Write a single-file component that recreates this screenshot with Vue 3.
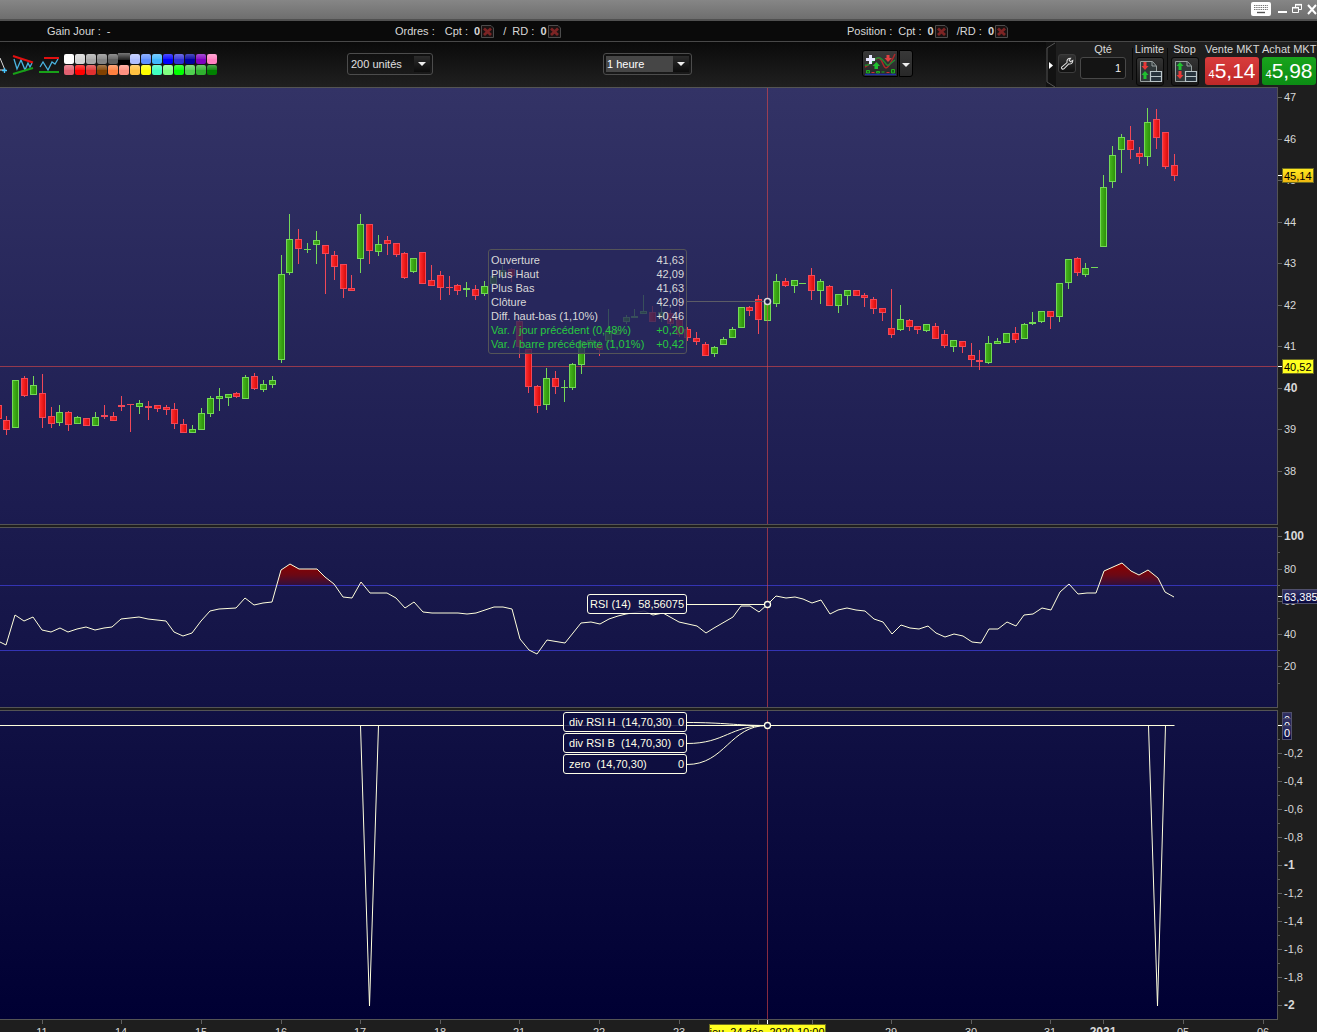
<script setup>
import { ref } from 'vue'

const WIDTH = 1277
const CURSOR_X = 767
const panes = {
  price: { top: 88, height: 436 },
  rsi: { top: 528, height: 179 },
  div: { top: 711, height: 308 },
}
const box = (p) => `0 ${p.top} ${WIDTH} ${p.height}`
const pctX = (x) => `${(x / WIDTH) * 100}%`
const pctY = (y, p) => `${((y - p.top) / p.height) * 100}%`

const units = ref('200 unités')
const period = ref('1 heure')
const quantity = ref('1')

const swatches = [
  ['#ffffff', '#d4d4d4', '#a8a8a8', '#848484', '#606060', '#000000', '#b0c0ff', '#6090ff', '#40b8ff', '#0000ff', '#3030d8', '#0000a0', '#8000c0', '#ff80c0'],
  ['#e06070', '#ff0000', '#e03030', '#804000', '#ff8040', '#ff9080', '#ffc040', '#ffff00', '#40ffc0', '#80ff80', '#00ff00', '#50d050', '#30b030', '#008000'],
]

// direction, high, body top, body bottom, low
const series = `
r 405 405 419 419|r 416 420 430 435|g 380 380 428 428|r 376 378 396 397|g 376 385 395 395|r 374 393 418 428
r 407 416 424 428|g 405 412 423 426|r 411 412 425 431|g 416 417 424 424|r 418 418 426 426|g 412 417 426 426
r 405 415 417 419|r 412 416 421 421|r 396 405 407 411|r 404 404 405 432|g 400 403 407 414|r 401 406 408 420
r 405 405 409 412|r 405 407 410 415|r 403 409 424 429|r 419 424 433 433|g 425 429 433 433|g 408 413 430 430
g 396 398 414 417|g 388 396 399 411|g 394 394 398 406|r 392 393 397 398|g 375 377 399 399|r 373 376 389 390
g 380 384 390 392|g 376 380 385 388|g 255 274 360 363|g 214 239 273 275|r 229 239 249 264|g 243 249 250 253
g 231 240 245 264|r 245 245 254 294|r 251 255 267 280|r 264 264 289 298|r 275 288 291 291|g 214 224 259 273
r 224 224 251 264|g 235 244 252 256|r 236 240 244 255|r 243 243 255 257|r 252 253 278 279|g 258 258 272 273
r 252 252 284 284|r 265 280 286 286|r 271 275 288 300|r 276 287 288 295|r 284 285 291 295|g 282 288 290 297
r 285 289 296 300|g 281 286 294 296|g 276 276 284 284|g 265 270 276 280|r 268 269 276 282|r 318 321 347 358
r 349 349 387 393|r 385 386 406 413|g 368 378 405 410|r 371 378 387 394|g 380 387 388 402|g 363 364 388 390
g 341 341 365 374|g 338 340 345 348|r 340 345 350 356|g 309 331 341 343|g 329 330 335 335|g 315 317 322 324
g 309 316 318 318|g 295 311 314 314|r 306 312 322 322|g 303 312 318 322|r 310 313 324 326|r 292 319 335 337
r 327 329 338 341|r 332 338 342 345|r 342 344 356 356|g 346 347 354 357|g 337 339 345 345|g 327 329 338 338
g 307 307 328 328|r 306 307 311 316|r 295 299 320 334|g 301 301 321 321|g 274 281 304 307|r 278 281 286 287
g 280 280 286 293|g 283 283 284 284|r 268 275 291 300|g 279 281 291 304|r 285 286 306 306|g 294 294 306 313
g 290 290 296 305|r 290 290 296 296|r 293 295 298 307|r 297 299 309 314|r 308 308 313 321|r 289 328 335 338
g 305 319 330 331|r 319 320 327 331|r 326 326 330 334|g 324 324 331 332|r 323 326 339 339|r 330 334 346 348
g 340 340 347 352|r 341 341 347 353|r 343 355 360 367|r 350 360 362 370|g 336 343 363 364|g 338 341 344 344
g 333 333 343 343|r 327 333 340 343|g 323 324 339 339|g 312 322 324 325|g 311 311 322 323|r 311 311 317 329
g 283 283 317 322|g 259 259 283 289|r 257 258 273 276|g 263 268 275 277|g 267 267 268 268|g 175 187 247 247
g 146 155 182 188|g 134 137 150 173|r 126 140 150 159|r 147 153 157 164|g 108 122 157 166|r 109 119 138 149
r 132 132 167 169|r 154 165 176 181`

const candles = series.trim().split(/[|\n]/).map((row, i) => {
  const [dir, ...values] = row.trim().split(' ')
  const [high, top, bottom, low] = values.map(Number)
  return { dir, high, top, bottom, low, x: Math.floor(6.9 + 8.845 * (i - 1)) }
})

const rsi = '0,642 6,645 15,615 24,621 33,617 42,630 51,632 60,628 68,632 77,629 86,627 95,630 104,628 112,627 121,619 130,618 139,617 148,619 166,621 174,632 183,636 192,633 201,621 210,611 219,609 236,608 245,598 254,605 263,603 272,602 281,570 290,564 299,569 317,569 325,577 334,584 343,597 352,598 361,582 370,593 387,593 396,598 405,608 414,602 423,612 432,613 458,613 467,614 476,613 485,610 494,607 503,607 512,609 520,639 529,650 537,654 547,640 565,643 581,623 591,622 600,624 609,619 618,616 626,614 644,611 653,615 663,613 679,622 688,624 697,626 706,633 714,628 733,617 741,606 750,606 759,612 768,604 776,596 786,598 795,597 803,599 812,603 821,600 830,614 838,610 847,608 856,610 865,611 874,619 883,622 892,634 901,625 910,628 919,629 928,626 936,633 945,637 954,634 963,636 972,642 981,643 989,629 998,629 1007,622 1016,626 1024,615 1033,614 1042,608 1051,610 1060,592 1069,584 1078,594 1087,593 1096,593 1104,571 1113,567 1122,563 1131,571 1139,575 1148,570 1158,578 1165,592 1174,597'

const priceLabels = [47, 46, 45, 44, 43, 42, 41, 40, 39, 38].map((v, i) => ({
  text: String(v), y: Math.round(97 + i * 41.55), bold: v === 40,
}))
const rsiLabels = [100, 80, 60, 40, 20].map((v, i) => ({
  text: String(v), y: Math.round(536 + i * 32.6), bold: v === 100,
}))
const divLabels = ['-0,2', '-0,4', '-0,6', '-0,8', '-1', '-1,2', '-1,4', '-1,6', '-1,8', '-2'].map((text, i) => ({
  text, y: 753 + i * 28, bold: text === '-1' || text === '-2',
}))
const axes = {
  price: { labels: priceLabels, minor: [], tags: [{ text: '45,14', y: 175, kind: 'last' }, { text: '40,52', y: 366, kind: 'cursor' }] },
  rsi: { labels: rsiLabels, minor: [552, 585, 618, 650, 683], tags: [{ text: '63,3854', y: 596, kind: 'value' }] },
  div: {
    labels: divLabels,
    minor: divLabels.map((l) => l.y - 14),
    tags: [{ text: '0', y: 719, kind: 'value' }, { text: '0', y: 725, kind: 'value' }, { text: '0', y: 732, kind: 'value' }],
  },
}

const dates = [
  ['11', 42], ['14', 121], ['15', 201], ['16', 281], ['17', 360], ['18', 440], ['21', 519], ['22', 599], ['23', 679],
  ['', 758], ['', 812], ['29', 891], ['30', 971], ['31', 1050], ['2021', 1103], ['05', 1183], ['06', 1263],
]

const ohlc = [
  ['Ouverture', '41,63'], ['Plus Haut', '42,09'], ['Plus Bas', '41,63'], ['Clôture', '42,09'],
  ['Diff. haut-bas (1,10%)', '+0,46'], ['Var. / jour précédent (0,48%)', '+0,20'], ['Var. / barre précédente (1,01%)', '+0,42'],
]
const divTips = [['div RSI H', '(14,70,30)'], ['div RSI B', '(14,70,30)'], ['zero', '(14,70,30)']]
</script>

<template>
  <div class="app">
    <header class="titlebar">
      <button class="keyboard" aria-label="Clavier">
        <svg width="20" height="14" viewBox="0 0 20 14">
          <rect width="20" height="14" rx="2" fill="#fff" />
          <g stroke="#777" stroke-width="1" stroke-dasharray="1.4 .8">
            <path d="M3 3.5H17M3 5.5H17M3 7.5H17" />
          </g>
          <path d="M6 10.5H14" stroke="#555" stroke-width="1.4" />
        </svg>
      </button>
      <button class="win" aria-label="Réduire">
        <svg width="10" height="14" viewBox="0 0 10 14"><path d="M1 10H10" stroke="#fff" stroke-width="2" /></svg>
      </button>
      <button class="win" aria-label="Restaurer">
        <svg width="10" height="14" viewBox="0 0 10 14" fill="none" stroke="#fff"><path d="M3.5 5V2.5H9.5V7.5H7" /><path d="M3 2.7H10" stroke-width="1.6" /><path d="M.5 5.5H6.500V10.5H.5Z" /><path d="M0 5.700H7" stroke-width="1.600" /></svg>
      </button>
      <button class="win" aria-label="Fermer">
        <svg width="10" height="14" viewBox="0 0 10 14"><path d="M1 3L9 12M9 3L1 12" stroke="#fff" stroke-width="2" /></svg>
      </button>
    </header>

    <section class="account">
      <div class="gain"><span>Gain Jour :</span><span>-</span></div>
      <div class="counts">
        <span class="lead">Ordres :</span>
        <span>Cpt : &nbsp;<b>0</b></span>
        <button class="cancel" aria-label="Annuler ordres Cpt"><svg width="13" height="13" viewBox="0 0 13 13"><path d="M.5 .5H10L12.500 3V12.500H.5Z" fill="#1a1212" stroke="#4c4c4c" /><path d="M3 3.500L10 10M10 3.500L3 10" stroke="#7c2424" stroke-width="2.800" /></svg></button>
        <span>/ &nbsp;RD : &nbsp;<b>0</b></span>
        <button class="cancel" aria-label="Annuler ordres RD"><svg width="13" height="13" viewBox="0 0 13 13"><path d="M.5 .5H10L12.500 3V12.500H.5Z" fill="#1a1212" stroke="#4c4c4c" /><path d="M3 3.500L10 10M10 3.500L3 10" stroke="#7c2424" stroke-width="2.800" /></svg></button>
      </div>
      <div class="counts">
        <span class="lead tight">Position :</span>
        <span>Cpt : &nbsp;<b>0</b></span>
        <button class="cancel" aria-label="Clôturer position Cpt"><svg width="13" height="13" viewBox="0 0 13 13"><path d="M.5 .5H10L12.500 3V12.500H.5Z" fill="#1a1212" stroke="#4c4c4c" /><path d="M3 3.500L10 10M10 3.500L3 10" stroke="#7c2424" stroke-width="2.800" /></svg></button>
        <span>/RD : &nbsp;<b>0</b></span>
        <button class="cancel" aria-label="Clôturer position RD"><svg width="13" height="13" viewBox="0 0 13 13"><path d="M.5 .5H10L12.500 3V12.500H.5Z" fill="#1a1212" stroke="#4c4c4c" /><path d="M3 3.500L10 10M10 3.500L3 10" stroke="#7c2424" stroke-width="2.800" /></svg></button>
      </div>
    </section>

    <section class="toolbar">
      <div class="drawing">
        <button class="tool cut" aria-label="Angle">
          <svg width="8" height="22" viewBox="0 0 8 22" fill="none"><path d="M0 4L5 16H0" stroke="#ddd" /><path d="M2 16.500H7M4.500 14V19" stroke="#4ac8ff" stroke-width="1.400" /></svg>
        </button>
        <button class="tool" aria-label="Triangle">
          <svg width="22" height="22" viewBox="0 0 22 22" fill="none"><path d="M2 5L5 15L9 6L13 16L16 9L18 13L20 9" stroke="#4ab4e0" stroke-width="1.300" /><path d="M1 2L21 8.500" stroke="#e01010" stroke-width="2" /><path d="M1 20L21 14" stroke="#18a018" stroke-width="2" /></svg>
        </button>
        <button class="tool" aria-label="Support et résistance">
          <svg width="22" height="22" viewBox="0 0 22 22" fill="none"><path d="M2 13L5 8L10 16L14 8L17 10L20 5" stroke="#4ab4e0" stroke-width="1.300" /><path d="M6 4H21" stroke="#e01010" stroke-width="2" /><path d="M1 18H21" stroke="#18a018" stroke-width="2" /></svg>
        </button>
        <div class="palette">
          <div v-for="(row, r) in swatches" :key="r" class="palette-row">
            <button
              v-for="c in row" :key="c" class="swatch" :class="{ chosen: c === '#000000' }"
              :style="{ backgroundColor: c }" :aria-label="'Couleur ' + c"
            ></button>
          </div>
        </div>
      </div>
      <div>
        <label class="combo">
          <select v-model="units" aria-label="Nombre d'unités"><option>200 unités</option></select>
          <svg class="arrow" width="16" height="16" viewBox="0 0 16 16"><path d="M4 6H12L8 10Z" fill="#eee" /></svg>
        </label>
      </div>
      <div>
        <label class="combo lit">
          <select v-model="period" aria-label="Période"><option>1 heure</option></select>
          <svg class="arrow" width="16" height="16" viewBox="0 0 16 16"><path d="M4 6H12L8 10Z" fill="#eee" /></svg>
        </label>
      </div>
      <div class="indicators">
        <button aria-label="Ajouter un indicateur">
          <svg width="34" height="25" viewBox="0 0 34 25" fill="none">
            <path d="M2 16C6 15 8 9 12 8S17 6 20 13S25 18 32 3" stroke="#b02828" stroke-width="1.500" />
            <path d="M2 14C8 17 11 4 17 7S23 17 27 13L32 9" stroke="#208a30" stroke-width="1.500" />
            <path d="M7.500 4V13M3 8.500H12" stroke="#e8e8ff" stroke-width="3" />
            <path d="M23.500 4H26.500V7H29L25 11L21.500 7H23.500Z" fill="#e04040" />
            <path d="M11.500 18V15H9.500L13.500 11L17 15H15V18Z" fill="#20c030" />
            <g stroke-width="1"><path d="M3.500 19.500H6.500V22H3.500ZM13.500 20.500H16.500V22H13.500ZM18.500 21H21.500M28.500 18.500H31.500V22H28.500Z" fill="#156015" stroke="#20b020" /><path d="M8.500 21.500H11.500M23.500 21.500H26.500" stroke="#d03030" /></g>
            <path d="M2 23.500H33" stroke="#2030a0" stroke-width="1.500" />
          </svg>
        </button>
        <button aria-label="Liste des indicateurs">
          <svg width="12" height="25" viewBox="0 0 12 25"><path d="M2 12H10L6 16Z" fill="#eee" /></svg>
        </button>
      </div>
      <div class="trading">
        <svg class="bracket" width="10" height="45" viewBox="0 0 10 45" fill="none"><path d="M9 1L1 6V40L9 45" stroke="#555" /><path d="M3 20L7 23.500L3 27Z" fill="#fff" /></svg>
        <button class="wrench" aria-label="Réglages">
          <svg width="18" height="18" viewBox="0 0 18 18" fill="none"><path d="M3 13L9 8C8.500 5 10 3 13 3L11.500 5.500L13 7L15.500 5.500C15.500 8.500 13.500 10 11 9.500L5.500 15C4 16 2 14.500 3 13Z" stroke="#ddd" stroke-width="1.200" /></svg>
        </button>
        <div class="field">
          <label for="qty">Qté</label>
          <input id="qty" v-model="quantity" type="text" />
        </div>
        <div class="order">
          <span id="limit">Limite</span>
          <button aria-labelledby="limit">
            <svg width="26" height="27" viewBox="0 0 26 27" fill="none"><path d="M3.500 3.500H15.500L19.500 8V23.500H3.500Z" fill="#30383a" stroke="#98a0a0" /><path d="M15 4V8H19" stroke="#98a0a0" /><path d="M6.500 4H9.500V8H11.500L8 12L4.500 8H6.500Z" fill="#e83838" /><path d="M6.500 21V17H4.500L8 13L11.500 17H9.500V21Z" fill="#20c030" /><path d="M13.500 13.500H24.500V23.500H13.500ZM13.500 18.500H24.500" fill="#26323c" stroke="#b8c4c8" stroke-width="1.200" /></svg>
          </button>
        </div>
        <div class="order">
          <span id="stop">Stop</span>
          <button aria-labelledby="stop">
            <svg width="26" height="27" viewBox="0 0 26 27" fill="none"><path d="M3.500 3.500H15.500L19.500 8V23.500H3.500Z" fill="#30383a" stroke="#98a0a0" /><path d="M15 4V8H19" stroke="#98a0a0" /><path d="M6.500 12V8H4.500L8 4L11.500 8H9.500V12Z" fill="#20c030" /><path d="M6.500 13H9.500V17H11.500L8 21L4.500 17H6.500Z" fill="#e83838" /><path d="M13.500 13.500H24.500V23.500H13.500ZM13.500 18.500H24.500" fill="#26323c" stroke="#b8c4c8" stroke-width="1.200" /></svg>
          </button>
        </div>
        <div class="market">
          <span id="sell">Vente MKT</span>
          <button class="sell" aria-describedby="sell"><small>4</small>5,14</button>
        </div>
        <div class="market">
          <span id="buy">Achat MKT</span>
          <button class="buy" aria-describedby="buy"><small>4</small>5,98</button>
        </div>
      </div>
    </section>

    <main class="charts">
      <section v-for="(pane, name) in panes" :key="name" class="row" :class="name">
        <div class="plot">
          <svg v-if="name === 'price'" class="canvas" :viewBox="box(pane)" preserveAspectRatio="none">
            <defs>
              <linearGradient id="up"><stop offset="0" stop-color="#45b51c" /><stop offset="1" stop-color="#2d920a" /></linearGradient>
              <linearGradient id="down"><stop offset="0" stop-color="#ff2c2c" /><stop offset="1" stop-color="#d80c0c" /></linearGradient>
            </defs>
            <rect x="0" y="366" :width="WIDTH" height="1" class="cross" />
            <g v-for="(c, i) in candles" :key="i" :class="c.dir">
              <rect :x="c.x" :y="c.high" width="1" :height="c.low - c.high" />
              <rect :x="c.x - 3" :y="c.top" width="7" :height="c.bottom - c.top" />
              <rect v-if="c.bottom - c.top > 2" class="fill" :x="c.x - 2" :y="c.top + 1" width="5" :height="c.bottom - c.top - 2" />
            </g>
            <rect :x="CURSOR_X" :y="pane.top" width="1" :height="pane.height" class="cross" />
            <rect x="687" y="301" width="77" height="1" fill="#5c5c66" />
            <circle cx="767.5" cy="301.5" r="3" fill="#1c1c48" stroke="#ddd" stroke-width="1.500" />
          </svg>

          <svg v-else-if="name === 'rsi'" class="canvas" :viewBox="box(pane)" preserveAspectRatio="none">
            <defs>
              <linearGradient id="hot" gradientUnits="userSpaceOnUse" x1="0" y1="564" x2="0" y2="586"><stop offset="0" stop-color="#8c0000" /><stop offset=".5" stop-color="#6c0814" /><stop offset="1" stop-color="#2c1040" /></linearGradient>
              <clipPath id="over"><rect x="0" y="528" :width="WIDTH" height="57" /></clipPath>
            </defs>
            <polygon :points="'0,700 ' + rsi + ' 1174,700'" fill="url(#hot)" clip-path="url(#over)" />
            <path d="M0 585.500H1277M0 650.500H1277" stroke="#3434b4" />
            <polyline :points="rsi" class="curve" />
            <rect :x="CURSOR_X" :y="pane.top" width="1" :height="pane.height" class="cross" />
            <path d="M687 604.500H764" class="curve" />
            <circle cx="767.500" cy="604.500" r="3" fill="#14144a" stroke="#ffffe8" stroke-width="1.300" />
          </svg>

          <svg v-else class="canvas" :viewBox="box(pane)" preserveAspectRatio="none">
            <rect :x="CURSOR_X" :y="pane.top" width="1" :height="pane.height" class="cross" />
            <path d="M0 725.500H1174.500M360.500 725.500L369.500 1006L378.500 725.500M1148.500 725.500L1157.500 1006L1165.500 725.500" class="curve" />
            <path d="M687 722.500C725 722.500 735 725.500 767 725.500M687 743.500C725 743.500 730 725.500 767 725.500M687 764.500C725 764.500 730 725.500 767 725.500" class="curve" />
            <circle cx="767.500" cy="725.500" r="3" fill="#0e0e42" stroke="#ffffe8" stroke-width="1.300" />
          </svg>

          <dl v-if="name === 'price'" class="tip ohlc" :style="{ top: pctY(249, pane) }">
            <div v-for="(r, i) in ohlc" :key="r[0]" :class="{ gainful: i > 4 }"><dt>{{ r[0] }}</dt><dd>{{ r[1] }}</dd></div>
          </dl>
          <div v-else-if="name === 'rsi'" class="tip single" :style="{ top: pctY(594, pane) }">
            <span>RSI (14)</span><span>58,56075</span>
          </div>
          <div v-else class="tip stack" :style="{ top: pctY(712, pane) }">
            <div v-for="t in divTips" :key="t[0]" class="single wide"><span>{{ t[0] }} &nbsp;{{ t[1] }}</span><span>0</span></div>
          </div>
        </div>

        <div class="axis">
          <i v-for="m in axes[name].minor" :key="'m' + m" class="minor" :style="{ top: pctY(m, pane) }"></i>
          <span v-for="l in axes[name].labels" :key="l.text" class="label" :class="{ bold: l.bold }" :style="{ top: pctY(l.y, pane) }">{{ l.text }}</span>
          <i v-if="name === 'div'" class="mark" :style="{ top: pctY(725, pane) }"></i>
          <span v-for="t in axes[name].tags" :key="t.y" class="tag" :class="t.kind" :style="{ top: pctY(t.y, pane) }">{{ t.text }}</span>
        </div>
      </section>

      <footer class="dates">
        <div class="scale">
          <span v-for="d in dates" :key="d[1]" class="date" :class="{ bold: d[0] === '2021' }" :style="{ left: pctX(d[1]) }">{{ d[0] }}</span>
          <span class="date now" :style="{ left: pctX(CURSOR_X) }"><mark>jeu. 24 déc. 2020 10:00</mark></span>
        </div>
      </footer>
    </main>
  </div>
</template>

<style>
body { margin: 0; background: #1e1e1e; }
</style>

<style scoped>
.app {
  display: flex;
  flex-direction: column;
  height: 100vh;
  min-width: 1100px;
  overflow: hidden;
  background: #1e1e1e;
  color: #d8d8d8;
  font: 11px/14px "Liberation Sans", Arial, sans-serif;
}
.app * { box-sizing: border-box; }
button { padding: 0; border: 0; background: none; color: inherit; font: inherit; }
svg { display: block; }

.titlebar {
  display: flex;
  justify-content: flex-end;
  align-items: flex-start;
  gap: 5px;
  height: 21px;
  padding-top: 2px;
  border-bottom: 2px solid #505050;
  background: linear-gradient(#868686, #6e6e6e);
}
.keyboard { margin-right: 1px; }

.account {
  display: grid;
  grid-template-columns: 395fr 452fr 470fr;
  align-items: center;
  height: 21px;
  border-bottom: 1px solid #484848;
  background: #0a0a0a;
}
.gain { display: flex; gap: 6px; padding-left: 47px; }
.counts { display: flex; align-items: center; white-space: nowrap; }
.lead { margin-right: 10px; }
.lead.tight { margin-right: 6px; }
.cancel { margin: 0 9px 0 1px; }

.toolbar {
  display: grid;
  grid-template-columns: 347fr 256fr 259fr 184fr 271px;
  height: 45px;
  background: linear-gradient(#0a0a0a, #202020);
}
.drawing { display: flex; align-items: center; }
.tool { margin-right: 4px; }
.palette { display: flex; flex-direction: column; gap: 1px; }
.palette-row { display: flex; gap: 1px; height: 10px; }
.swatch {
  width: 10px;
  height: 10px;
  border-radius: 2px;
  background-image: linear-gradient(rgba(255, 255, 255, .3), rgba(255, 255, 255, .1) 45%, transparent 50%);
}
.swatch.chosen {
  width: 12px;
  height: 12px;
  margin: -1px -1px 0;
  border-radius: 0;
  background-image: linear-gradient(#777, #222 55%, #000 60%);
}
.combo {
  position: relative;
  display: block;
  width: 86px;
  height: 22px;
  margin-top: 11px;
  padding: 2px;
  border: 1px solid #4c4c4c;
  border-radius: 3px;
}
.combo.lit { width: 89px; }
.combo select {
  appearance: none;
  width: 100%;
  height: 16px;
  padding: 0 2px 0 1px;
  border: 0;
  background: none;
  color: #e0e0e0;
  font: inherit;
}
.combo.lit select { background: #464646; color: #fff; }
.arrow {
  position: absolute;
  top: 2px;
  right: 2px;
  background: linear-gradient(#2c2c2c, #0c0c0c);
  pointer-events: none;
}
.indicators { display: flex; gap: 1px; height: 27px; margin-top: 8px; }
.indicators button { border: 1px solid #000; border-radius: 3px 0 0 3px; background: linear-gradient(#383838, #282828); }
.indicators button + button { border-radius: 0 3px 3px 0; }

.trading { display: flex; background: #1e1e1e; }
.trading > div > span, .trading label { display: block; height: 15px; line-height: 15px; white-space: nowrap; }
.bracket { flex: none; background: #121212; }
.wrench {
  flex: none;
  align-self: flex-start;
  margin: 12px 4px 0 2px;
  border: 1px solid #3c3c3c;
  border-radius: 3px;
  background: linear-gradient(#333, #101010);
}
.wrench svg { width: 16px; height: 17px; }
.field { width: 46px; margin-right: 6px; text-align: center; }
.field input {
  display: block;
  width: 46px;
  height: 22px;
  padding: 0 4px;
  border: 1px solid #484848;
  border-radius: 3px;
  background: #141414;
  color: #eee;
  font: inherit;
  text-align: right;
}
.order { display: flex; flex-direction: column; align-items: center; width: 35px; background: linear-gradient(#080808, #080808) 0 6px / 1px 32px no-repeat; }
.order button { border: 1px solid #080808; border-radius: 3px; background: linear-gradient(#343434, #181818); }
.market { width: 54px; margin-left: 3px; }
.order + .market { box-shadow: none; }
.market button {
  display: flex;
  justify-content: center;
  align-items: baseline;
  width: 54px;
  height: 28px;
  border-radius: 3px;
  color: #fff;
  font-size: 21px;
  line-height: 28px;
}
.market small { font-size: 11px; }
.sell { background: linear-gradient(#d83c3c, #c02828); }
.buy { background: linear-gradient(#18a41c, #0c8c14); }

.charts { display: flex; flex: 1; flex-direction: column; min-height: 0; }
.row { display: flex; margin-bottom: 2px; }
.row.price { flex: 438 1 0; }
.row.rsi { flex: 181 1 0; }
.row.div { flex: 310 1 0; margin-bottom: 0; }
.plot { position: relative; flex: 1; border: solid #545454; border-width: 1px 1px 1px 0; }
.price .plot { background: linear-gradient(#333366, #1b1b4f); }
.rsi .plot { background: linear-gradient(#1b1b4e, #111144); }
.div .plot { background: linear-gradient(#111144, #000033); }
.canvas { position: absolute; width: 100%; height: 100%; }
.cross { fill: #e04848; fill-opacity: .6; }
.curve { fill: none; stroke: #ffffdc; stroke-width: 1; }
.g { fill: #74d858; }
.g .fill { fill: url(#up); }
.r { fill: #f04858; }
.r .fill { fill: url(#down); }

.tip { position: absolute; right: 46.2%; margin: 0; }
.ohlc {
  width: 199px;
  padding: 3px 2px 2px;
  border: 1px solid #545458;
  border-radius: 3px;
  background: rgba(40, 40, 92, .78);
}
.ohlc div { display: flex; justify-content: space-between; height: 14px; white-space: nowrap; }
.ohlc dd { margin: 0; }
.gainful { color: #28c840; }
.single {
  display: flex;
  justify-content: space-between;
  align-items: center;
  width: 100px;
  height: 20px;
  padding: 0 2px;
  border: 1px solid #ffffe8;
  border-radius: 3px;
  background: rgba(20, 20, 72, .85);
  color: #ffffe8;
}
.stack { display: flex; flex-direction: column; gap: 1px; }
.single.wide { width: 124px; padding: 0 2px 0 5px; background: rgba(14, 14, 64, .85); }

.axis { position: relative; width: 39px; margin: 1px 0; }
.label { position: absolute; left: 0; height: 12px; margin-top: -6px; padding-left: 6px; line-height: 13px; white-space: nowrap; }
.label::before { content: ""; position: absolute; left: 0; top: 6px; width: 4px; height: 1px; background: #606060; }
.bold { font-weight: bold; font-size: 12px; }
.minor { position: absolute; left: 0; width: 2px; height: 1px; background: #606060; }
.mark { position: absolute; left: 0; width: 4px; height: 1px; background: #fff; }
.tag { position: absolute; left: 4px; height: 15px; margin-top: -7px; padding: 0 1px; border: 1px solid #6c6c20; line-height: 14px; white-space: nowrap; }
.tag::before { content: ""; position: absolute; left: -5px; top: 6px; width: 4px; height: 1px; background: #fff; }
.div .tag::before { display: none; }
.last { background: linear-gradient(#ffe820, #f0b810); color: #000; }
.cursor { background: #ffff20; color: #000; }
.value { border-color: #50506c; background: linear-gradient(#333366, #080840); color: #fff; }

.dates { height: 12px; overflow: hidden; padding-right: 40px; }
.scale { position: relative; height: 12px; }
.date { position: absolute; width: 0; height: 20px; padding-top: 6px; display: flex; justify-content: center; white-space: nowrap; line-height: 12px; }
.date::before { content: ""; position: absolute; left: 0; top: 0; width: 1px; height: 4px; background: #606060; }
.now { padding-top: 4px; }
.now::before { background: #fff; }
.now mark { border: 1px solid #70701c; background: #ffff20; color: #000; line-height: 14px; height: 16px; flex: none; }
</style>
